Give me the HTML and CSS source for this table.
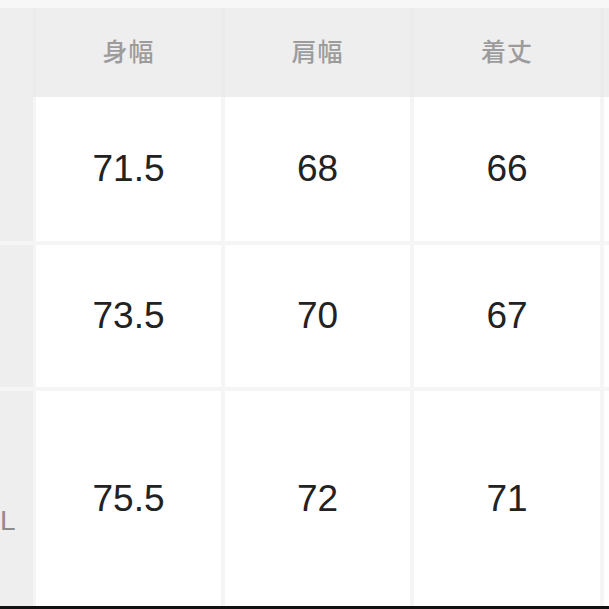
FILE: index.html
```html
<!DOCTYPE html>
<html lang="ja">
<head>
<meta charset="utf-8">
<link rel="stylesheet" href="styles.css">
</head>
<body>
<div class="top-strip"></div>
<div class="table">
  <div class="cell side head"></div>
  <div class="cell head first">身幅</div>
  <div class="cell head">肩幅</div>
  <div class="cell head">着丈</div>
  <div class="cell head"></div>

  <div class="cell side"></div>
  <div class="cell val first">71.5</div>
  <div class="cell val">68</div>
  <div class="cell val">66</div>
  <div class="cell val"></div>

  <div class="cell side sep"></div>
  <div class="cell val sep first">73.5</div>
  <div class="cell val sep">70</div>
  <div class="cell val sep">67</div>
  <div class="cell val sep"></div>

  <div class="cell side sep label">L</div>
  <div class="cell val sep first">75.5</div>
  <div class="cell val sep">72</div>
  <div class="cell val sep">71</div>
  <div class="cell val sep"></div>
</div>
<div class="bottom-bar"></div>
</body>
</html>
```

FILE: styles.css
```css
html, body {
  margin: 0;
  padding: 0;
  width: 609px;
  height: 609px;
  overflow: hidden;
  background: #f7f7f7;
}

.top-strip {
  height: 8px;
  background: #f7f7f7;
}

.table {
  display: grid;
  grid-template-columns: 33px 188px 189px 190px 1fr;
  grid-template-rows: 89px 144px 146px 219px;
  background: #f5f5f5;
}

.cell {
  box-sizing: border-box;
  display: flex;
  align-items: center;
  justify-content: center;
  overflow: hidden;
  border-left: 4px solid #f5f5f5;
}

.cell.first {
  border-left-width: 3px;
}

.cell.side {
  border-left: none;
  background: #eeeeee;
}

.cell.head {
  background: #eeeeee;
  border-left-color: #ebebeb;
  font-family: "Noto Sans CJK JP", sans-serif;
  font-size: 25px;
  font-weight: 500;
  color: #9c9c9c;
  padding-bottom: 6px;
  letter-spacing: 1px;
}

.cell.side.head {
  border-left: none;
}

.cell.val {
  background: #ffffff;
  font-family: "Liberation Sans", Arial, sans-serif;
  font-size: 37px;
  color: #222222;
}

.cell.sep {
  border-top: 4px solid #f5f5f5;
}

.cell.label {
  justify-content: flex-start;
  padding-top: 44px;
  font-family: "Liberation Sans", Arial, sans-serif;
  font-size: 28px;
  color: #8c8c8c;
}

.bottom-bar {
  height: 4px;
  background: #111111;
}
```
